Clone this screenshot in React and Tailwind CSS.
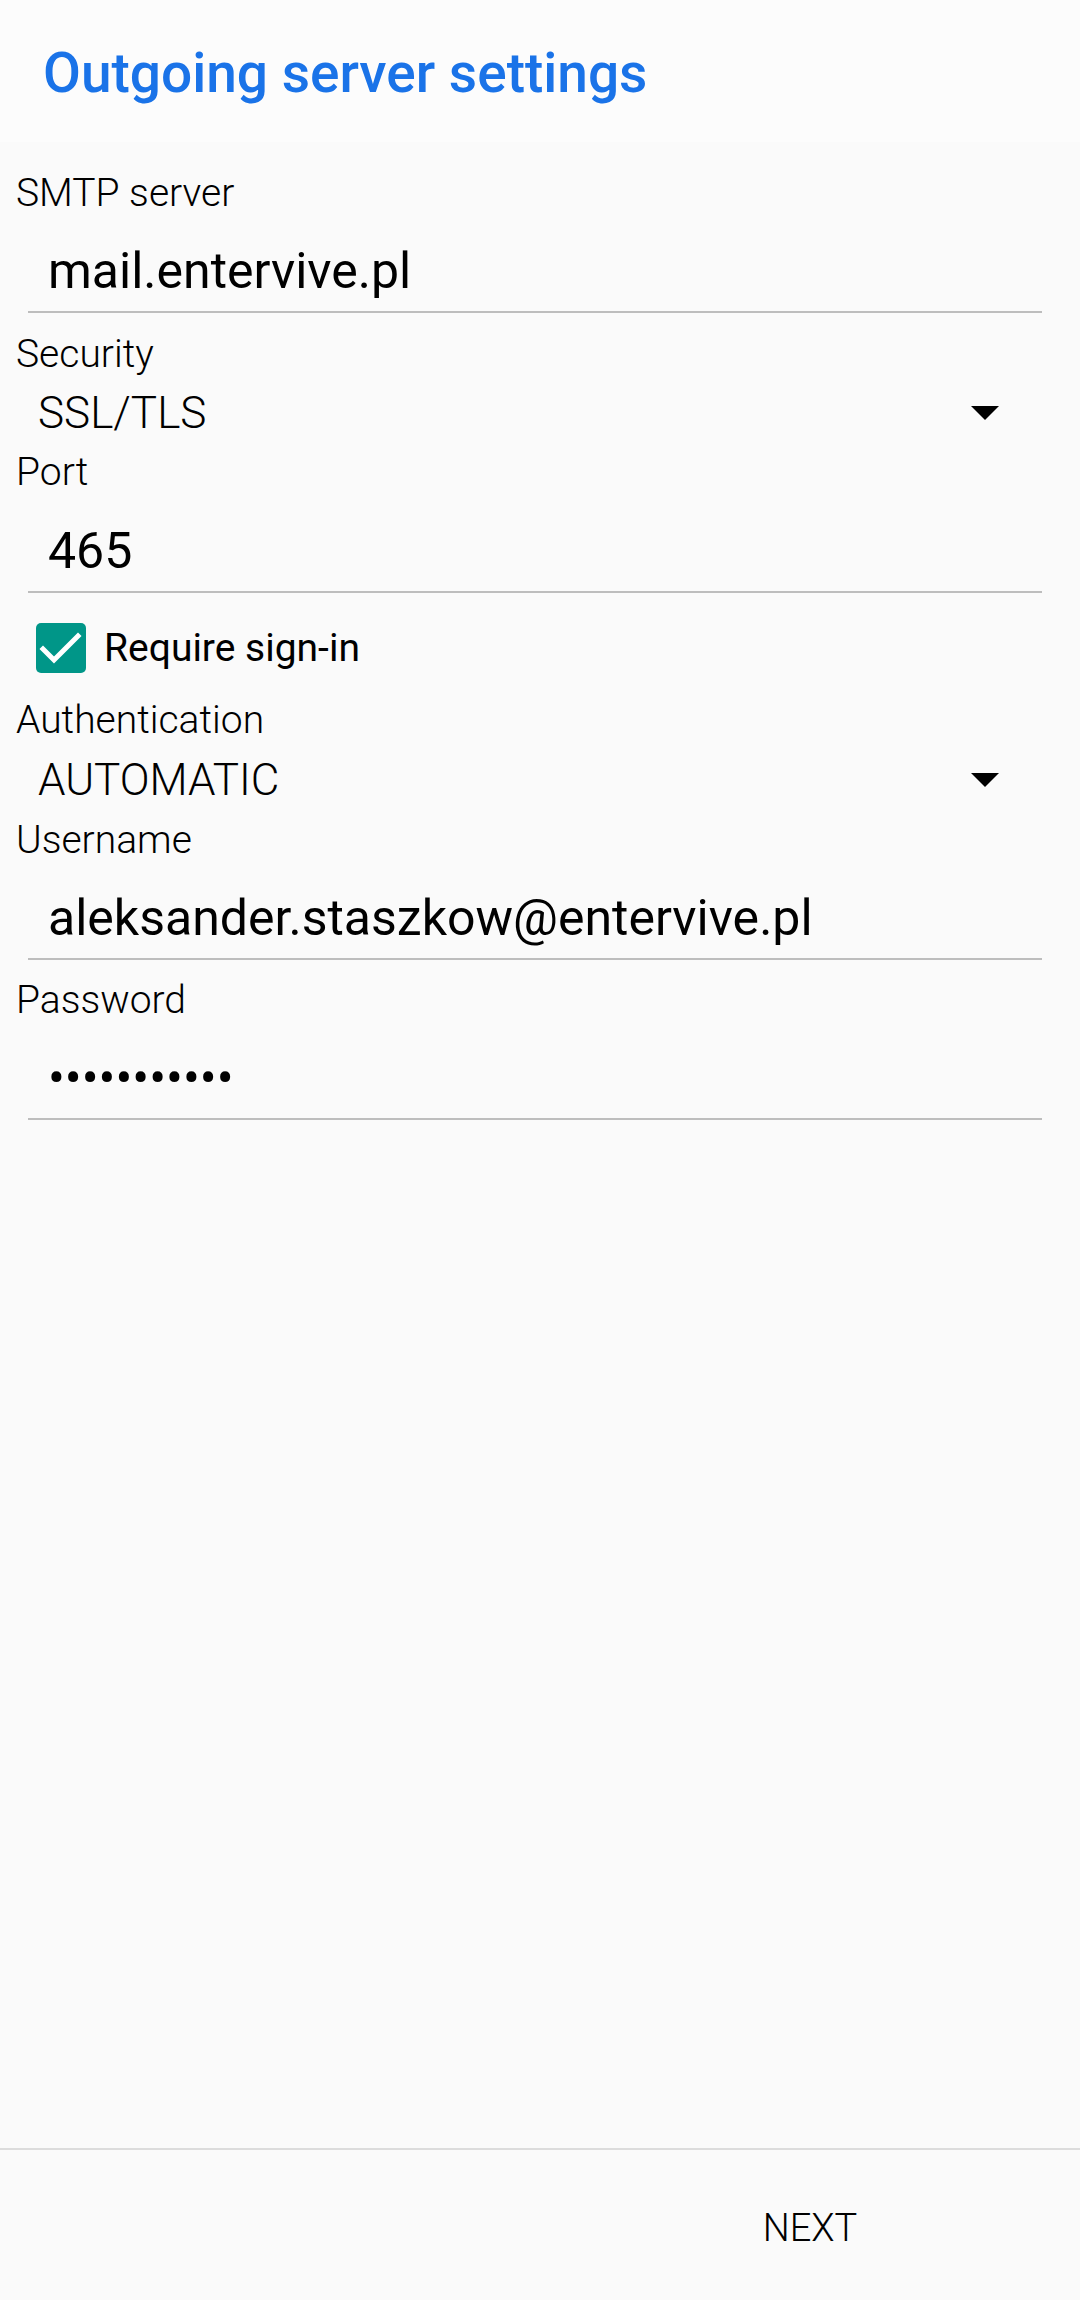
import React from "react"

const roboto = { fontFamily: "Roboto, 'Noto Sans', Arial, sans-serif" }

function Label({ children, className = "" }) {
  return (
    <div className={`h-[50px] pl-[16px] text-[39px] leading-[50px] font-light text-black ${className}`}>
      {children}
    </div>
  )
}

function TextField({ value, className = "" }) {
  return (
    <div className={`ml-[28px] mr-[38px] border-b-2 border-[#bdbdbd] pb-[10px] ${className}`}>
      <div className="h-[60px] pl-[20px] text-[50px] leading-[60px] text-black whitespace-nowrap">
        {value}
      </div>
    </div>
  )
}

function Caret() {
  return (
    <svg width="28" height="14" viewBox="0 0 28 14" className="shrink-0">
      <polygon points="0,0 28,0 14,14" fill="#000" />
    </svg>
  )
}

function Spinner({ value, className = "" }) {
  return (
    <div className={`flex h-[56px] items-center pl-[38px] pr-[81px] ${className}`}>
      <span className="flex-1 text-[44px] leading-[56px] font-light text-black">{value}</span>
      <Caret />
    </div>
  )
}

export default function App() {
  return (
    <div style={roboto} className="flex h-[2300px] w-[1080px] flex-col bg-[#fafafa]">
      <div className="h-[142px] bg-[#fcfcfc] pl-[43px] pt-[41px]">
        <h1 className="text-[55px] leading-[64px] font-medium text-[#1a73e8]">
          Outgoing server settings
        </h1>
      </div>

      <div className="flex flex-col">
        <Label className="mt-[26px]">SMTP server</Label>
        <TextField value="mail.entervive.pl" className="mt-[23px]" />

        <Label className="mt-[16px]">Security</Label>
        <Spinner value="SSL/TLS" className="mt-[6px]" />

        <Label className="mt-[6px]">Port</Label>
        <TextField value="465" className="mt-[24px]" />

        <div className="mt-[30px] flex h-[50px] items-center pl-[36px]">
          <span className="flex h-[50px] w-[50px] items-center justify-center rounded-[5px] bg-[#009688]">
            <svg width="50" height="50" viewBox="0 0 50 50">
              <polyline
                points="7,26 18,37 42,13"
                fill="none"
                stroke="#fff"
                strokeWidth="5"
                strokeLinecap="square"
              />
            </svg>
          </span>
          <span className="ml-[18px] text-[39px] leading-[50px] text-black">Require sign-in</span>
        </div>

        <Label className="mt-[22px]">Authentication</Label>
        <Spinner value="AUTOMATIC" className="mt-[7px]" />

        <Label className="mt-[7px]">Username</Label>
        <TextField value="aleksander.staszkow@entervive.pl" className="mt-[23px]" />

        <Label className="mt-[15px]">Password</Label>
        <TextField value="•••••••••••" className="mt-[23px]" />
      </div>

      <div className="flex-1" />

      <div className="h-[152px] border-t-2 border-[#dcdcdc]">
        <div className="grid grid-cols-2 pt-[53px]">
          <div />
          <div className="text-center text-[38px] leading-[50px] font-light text-black">NEXT</div>
        </div>
      </div>
    </div>
  )
}
